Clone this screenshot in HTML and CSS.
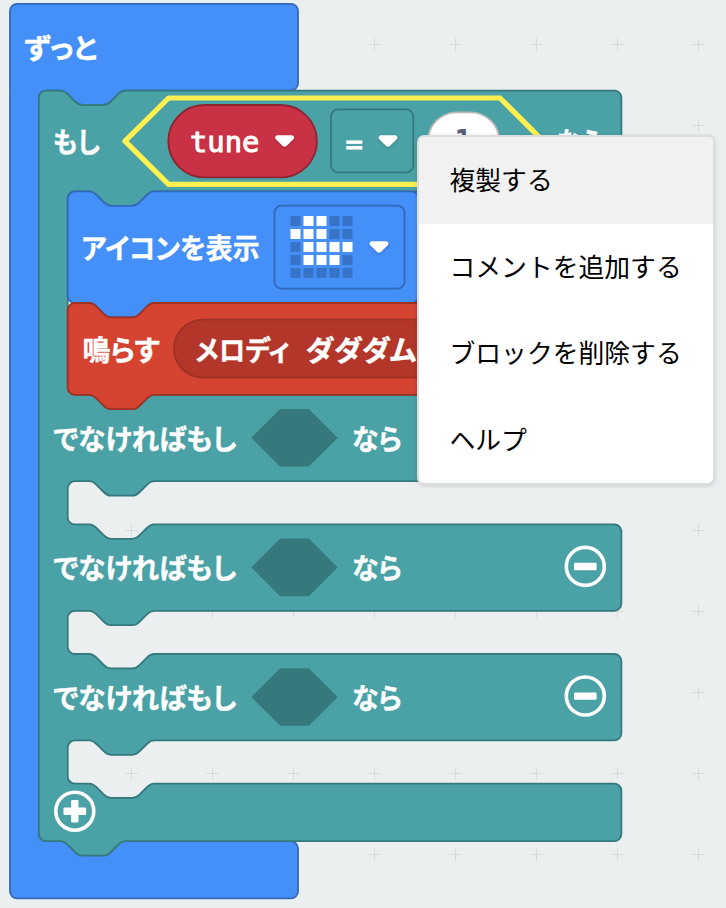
FILE: index.html
```html
<!DOCTYPE html>
<html lang="ja">
<head>
<meta charset="utf-8">
<title>ブロック</title>
<link rel="stylesheet" href="styles.css">
</head>
<body>
<main class="workspace">
<svg class="blocks" width="726" height="908" viewBox="0 0 726 908">
  <defs>
    <pattern id="grid" width="81" height="81" patternUnits="userSpaceOnUse" x="10" y="4">
      <path class="grid-mark" d="M34.2 40.5h12.6M40.5 34.2v12.6"/>
    </pattern>
    <path id="arrow" d="M-7.4 -5.8H7.4Q9.4 -5.6 9.4 -3.6Q9.4 -2.4 8.5 -1.5L2.2 4.7Q0 6.8 -2.2 4.7L-8.5 -1.5Q-9.4 -2.4 -9.4 -3.6Q-9.4 -5.6 -7.4 -5.8Z"/>
    <path id="slot" d="M0 28.8L28.8 0H57.6L86.4 28.8L57.6 57.6H28.8Z"/>
  </defs>
  <rect width="726" height="908" fill="url(#grid)"/>

  <!-- forever -->
  <g transform="translate(10 3.8) scale(1.8)">
    <path class="block basic" d="M0 4a4 4 0 0 1 4-4H156a4 4 0 0 1 4 4V44.2a4 4 0 0 1-4 4H64c-2 0-3 1-4 2l-4 4c-1 1-2 2-4 2h-12c-2 0-3-1-4-2l-4-4c-1-1-2-2-4-2h-8a4 4 0 0 0-4 4V461.2a4 4 0 0 0 4 4H156a4 4 0 0 1 4 4V493a4 4 0 0 1-4 4H4a4 4 0 0 1-4-4Z"/>
  </g>
  <text class="label" x="24" y="58.5" textLength="73" lengthAdjust="spacingAndGlyphs">ずっと</text>

  <!-- if / else if -->
  <g transform="translate(38.9 90.6) scale(1.8)">
    <path class="block logic" d="M0 4a4 4 0 0 1 4-4h8c2 0 3 1 4 2l4 4c1 1 2 2 4 2h12c2 0 3-1 4-2l4-4c1-1 2-2 4-2H319.6a4 4 0 0 1 4 4V52a4 4 0 0 1-4 4
      H64c-2 0-3 1-4 2l-4 4c-1 1-2 2-4 2h-12c-2 0-3-1-4-2l-4-4c-1-1-2-2-4-2h-8a4 4 0 0 0-4 4V165a4 4 0 0 0 4 4h8c2 0 3 1 4 2l4 4c1 1 2 2 4 2h12c2 0 3-1 4-2l4-4c1-1 2-2 4-2H319.6a4 4 0 0 1 4 4V213a4 4 0 0 1-4 4
      H64c-2 0-3 1-4 2l-4 4c-1 1-2 2-4 2h-12c-2 0-3-1-4-2l-4-4c-1-1-2-2-4-2h-8a4 4 0 0 0-4 4V237a4 4 0 0 0 4 4h8c2 0 3 1 4 2l4 4c1 1 2 2 4 2h12c2 0 3-1 4-2l4-4c1-1 2-2 4-2H319.6a4 4 0 0 1 4 4V285a4 4 0 0 1-4 4
      H64c-2 0-3 1-4 2l-4 4c-1 1-2 2-4 2h-12c-2 0-3-1-4-2l-4-4c-1-1-2-2-4-2h-8a4 4 0 0 0-4 4V309a4 4 0 0 0 4 4h8c2 0 3 1 4 2l4 4c1 1 2 2 4 2h12c2 0 3-1 4-2l4-4c1-1 2-2 4-2H319.6a4 4 0 0 1 4 4V357a4 4 0 0 1-4 4
      H64c-2 0-3 1-4 2l-4 4c-1 1-2 2-4 2h-12c-2 0-3-1-4-2l-4-4c-1-1-2-2-4-2h-8a4 4 0 0 0-4 4V381a4 4 0 0 0 4 4h8c2 0 3 1 4 2l4 4c1 1 2 2 4 2h12c2 0 3-1 4-2l4-4c1-1 2-2 4-2H319.6a4 4 0 0 1 4 4V413a4 4 0 0 1-4 4
      H48c-2 0-3 1-4 2l-4 4c-1 1-2 2-4 2h-12c-2 0-3-1-4-2l-4-4c-1-1-2-2-4-2h-8a4 4 0 0 1-4-4Z"/>
  </g>
  <text class="label" x="53" y="152.5" textLength="47" lengthAdjust="spacingAndGlyphs">もし</text>
  <path class="condition" d="M125 141.2L168.6 98H500L543.2 141.2L500 184.4H168.6Z"/>
  <rect class="variable" x="168.3" y="105" width="148.6" height="72.4" rx="36.2"/>
  <text class="mono" x="190" y="152">tune</text>
  <use class="arrow" href="#arrow" x="284.6" y="141"/>
  <rect class="operator" x="331" y="109.4" width="82.3" height="63" rx="7.2"/>
  <text class="mono" x="345.5" y="154">=</text>
  <use class="arrow" href="#arrow" x="388" y="141"/>
  <rect class="number" x="428" y="112.3" width="71.3" height="57.6" rx="28.8"/>
  <text class="digit" x="454.5" y="150">1</text>
  <text class="label" x="557" y="153" textLength="45" lengthAdjust="spacingAndGlyphs">なら</text>

  <!-- show icon -->
  <g transform="translate(67.7 191.4) scale(1.8)">
    <path class="block basic" d="M0 4a4 4 0 0 1 4-4h8c2 0 3 1 4 2l4 4c1 1 2 2 4 2h12c2 0 3-1 4-2l4-4c1-1 2-2 4-2H191a4 4 0 0 1 4 4V58a4 4 0 0 1-4 4H48c-2 0-3 1-4 2l-4 4c-1 1-2 2-4 2h-12c-2 0-3-1-4-2l-4-4c-1-1-2-2-4-2h-8a4 4 0 0 1-4-4Z"/>
  </g>
  <text class="label" x="81.5" y="258.5" textLength="178" lengthAdjust="spacingAndGlyphs">アイコンを表示</text>
  <rect class="picker" x="274.5" y="205.6" width="130" height="83" rx="7.2"/>
  <g class="leds">
    <path class="off" d="M290.5 221h10m29 0h10m3 0h10M329.5 234h10m3 0h10M290.5 247h10M290.5 260h10m42 0h10M290.5 273h10m3 0h10m3 0h10m3 0h10m3 0h10"/>
    <path class="on" d="M303.5 221h10m3 0h10M290.5 234h10m3 0h10m3 0h10M303.5 247h10m3 0h10m3 0h10m3 0h10M303.5 260h10m3 0h10m3 0h10"/>
  </g>
  <use class="arrow" href="#arrow" x="379" y="247"/>

  <!-- play melody -->
  <g transform="translate(67.7 303) scale(1.8)">
    <path class="block music" d="M0 4a4 4 0 0 1 4-4h8c2 0 3 1 4 2l4 4c1 1 2 2 4 2h12c2 0 3-1 4-2l4-4c1-1 2-2 4-2H301a4 4 0 0 1 4 4V47a4 4 0 0 1-4 4H48c-2 0-3 1-4 2l-4 4c-1 1-2 2-4 2h-12c-2 0-3-1-4-2l-4-4c-1-1-2-2-4-2h-8a4 4 0 0 1-4-4Z"/>
  </g>
  <text class="label" x="82.5" y="360.5" textLength="77" lengthAdjust="spacingAndGlyphs">鳴らす</text>
  <rect class="melody" x="174" y="319.6" width="300" height="58" rx="29"/>
  <text class="label" x="195.5" y="361" textLength="94" lengthAdjust="spacingAndGlyphs">メロディ</text>
  <text class="label" x="305.5" y="361" textLength="111" lengthAdjust="spacingAndGlyphs">ダダダム</text>

  <!-- else-if rows -->
  <text class="label" x="53.5" y="449.5" textLength="183" lengthAdjust="spacingAndGlyphs">でなければもし</text>
  <use class="slot" href="#slot" x="251.3" y="409"/>
  <text class="label" x="352" y="449.5" textLength="50" lengthAdjust="spacingAndGlyphs">なら</text>

  <text class="label" x="53.5" y="579" textLength="183" lengthAdjust="spacingAndGlyphs">でなければもし</text>
  <use class="slot" href="#slot" x="251.3" y="538.6"/>
  <text class="label" x="352" y="579" textLength="50" lengthAdjust="spacingAndGlyphs">なら</text>
  <g transform="translate(585.3 566.4)"><circle class="ring" r="19"/><rect class="bar" x="-11.3" y="-3.6" width="22.6" height="7.4" rx="1"/></g>

  <text class="label" x="53.5" y="708.7" textLength="183" lengthAdjust="spacingAndGlyphs">でなければもし</text>
  <use class="slot" href="#slot" x="251.3" y="668.2"/>
  <text class="label" x="352" y="708.7" textLength="50" lengthAdjust="spacingAndGlyphs">なら</text>
  <g transform="translate(585.3 696)"><circle class="ring" r="19"/><rect class="bar" x="-11.3" y="-3.6" width="22.6" height="7.4" rx="1"/></g>

  <g transform="translate(74.8 811.2)"><circle class="ring" r="19"/><rect class="bar" x="-11.3" y="-3.7" width="22.6" height="7.4" rx="1"/><rect class="bar" x="-3.7" y="-11.3" width="7.4" height="22.6" rx="1"/></g>
</svg>

<ul class="menu">
  <li class="menu-item active"><span>複製する</span></li>
  <li class="menu-item"><span>コメントを追加する</span></li>
  <li class="menu-item"><span>ブロックを削除する</span></li>
  <li class="menu-item"><span>ヘルプ</span></li>
</ul>
</main>
</body>
</html>
```
FILE: styles.css
```css
body { margin: 0; background: #ebeff0; font-family: "Noto Sans CJK JP", sans-serif; }
.workspace { position: relative; width: 726px; height: 908px; overflow: hidden; }
.blocks { display: block; }
.grid-mark { stroke: #d7dbdc; stroke-width: 1.2; fill: none; }
.block { stroke-width: 1; }
.basic { fill: #458ff8; stroke: #3269b9; }
.logic { fill: #4aa2a6; stroke: #35797d; }
.music { fill: #d54331; stroke: #9f3024; }
.label { font-size: 28px; font-weight: 700; fill: #fff; stroke: #fff; stroke-width: .4; font-feature-settings: "palt"; }
.mono, .digit { font-family: "DejaVu Sans Mono", monospace; font-size: 28.8px; }
.mono { fill: #fff; stroke: #fff; stroke-width: 1; }
.digit { fill: #575e75; font-weight: 700; }
.condition { fill: #4aa2a6; stroke: #fff050; stroke-width: 5.2; stroke-linejoin: round; }
.variable { fill: #c93144; stroke: #8f2431; stroke-width: 1.8; }
.operator { fill: none; stroke: #35797d; stroke-width: 1.8; }
.number { fill: #fff; stroke: #b8b8b8; stroke-width: 1.8; }
.picker { fill: none; stroke: #3269b9; stroke-width: 1.8; }
.melody { fill: #b23629; stroke: #9f3024; stroke-width: 1.8; }
.slot { fill: #35797d; }
.arrow { fill: #fff; filter: drop-shadow(0 1px 1px rgba(0, 0, 0, .2)); }
.leds path { fill: none; stroke-width: 10; }
.leds .off { stroke: #3773c7; }
.leds .on { stroke: #fff; }
.ring { fill: none; stroke: #fff; stroke-width: 3.6; }
.bar { fill: #fff; }
.menu {
  position: absolute; left: 417px; top: 135px; box-sizing: border-box;
  width: 298px; height: 350px; margin: 0; padding: 0; list-style: none;
  display: flex; flex-direction: column;
  background: #fff; border: 2px solid #dcdddd; border-radius: 7px; overflow: hidden;
  box-shadow: 0 1px 4px rgba(0, 0, 0, .14);
}
.menu-item { flex: 1; display: flex; align-items: center; padding: 0 0 2px 30.5px; font-size: 25.8px; line-height: 1; color: #000; white-space: nowrap; }
.active { background: #f1f1f1; }
```
